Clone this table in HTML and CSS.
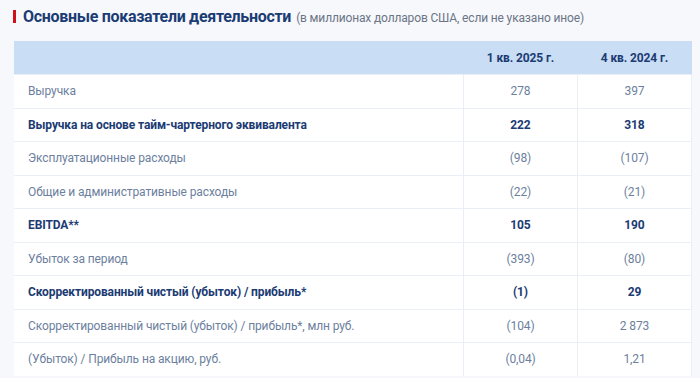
FILE: index.html
```html
<!DOCTYPE html>
<html lang="ru">
<head>
<meta charset="utf-8">
<link rel="stylesheet" href="styles.css">
</head>
<body>
<div class="page">
  <h2 class="title"><span class="title-main">Основные показатели деятельности</span> <span class="title-note">(в миллионах долларов США, если не указано иное)</span></h2>
  <table class="kpi">
    <thead>
      <tr><th class="label"></th><th>1 кв. 2025 г.</th><th>4 кв. 2024 г.</th></tr>
    </thead>
    <tbody>
      <tr><td class="label">Выручка</td><td>278</td><td>397</td></tr>
      <tr class="strong"><td class="label">Выручка на основе тайм-чартерного эквивалента</td><td>222</td><td>318</td></tr>
      <tr><td class="label">Эксплуатационные расходы</td><td>(98)</td><td>(107)</td></tr>
      <tr><td class="label">Общие и административные расходы</td><td>(22)</td><td>(21)</td></tr>
      <tr class="strong"><td class="label">EBITDA**</td><td>105</td><td>190</td></tr>
      <tr><td class="label">Убыток за период</td><td>(393)</td><td>(80)</td></tr>
      <tr class="strong"><td class="label">Скорректированный чистый (убыток) / прибыль*</td><td>(1)</td><td>29</td></tr>
      <tr><td class="label">Скорректированный чистый (убыток) / прибыль*, млн руб.</td><td>(104)</td><td>2 873</td></tr>
      <tr><td class="label">(Убыток) / Прибыль на акцию, руб.</td><td>(0,04)</td><td>1,21</td></tr>
    </tbody>
  </table>
</div>
</body>
</html>
```
FILE: styles.css
```css
html, body {
  margin: 0;
  padding: 0;
  background: #f6f8fc;
  font-family: Roboto, "Noto Sans", sans-serif;
}
.page {
  padding: 10px 8px 0 14px;
}
.title {
  display: flex;
  align-items: baseline;
  gap: 5px;
  height: 13px;
  margin: 0 0 18px -1px;
  padding-left: 7px;
  border-left: 3px solid #d0101b;
  font-size: 16px;
  line-height: 13px;
  font-weight: 400;
  white-space: nowrap;
}
.title-main {
  font-size: 16px;
  font-weight: 700;
  color: #1b3b73;
  letter-spacing: -0.3px;
}
.title-note {
  font-size: 12px;
  color: #6c7585;
  letter-spacing: -0.15px;
}
.kpi {
  width: 678px;
  border-collapse: collapse;
  background: #ffffff;
  font-size: 12px;
  letter-spacing: -0.12px;
}
.kpi th {
  background: #c9ddf4;
  color: #1b3b73;
  font-weight: 700;
  height: 33px;
  padding: 0;
  text-align: center;
  width: 114px;
}
.kpi th.label { width: auto; }
.kpi td {
  height: 32.5px;
  padding: 0;
  text-align: center;
  color: #6d7f9e;
  border-top: 1px solid #e9eef7;
  border-left: 1px solid #e9eef7;
  border-right: 1px solid #e9eef7;
}
.kpi td.label {
  text-align: left;
  padding-left: 14px;
  border-left: none;
}
.kpi tr.strong td {
  color: #1b3b73;
  font-weight: 700;
}
```
